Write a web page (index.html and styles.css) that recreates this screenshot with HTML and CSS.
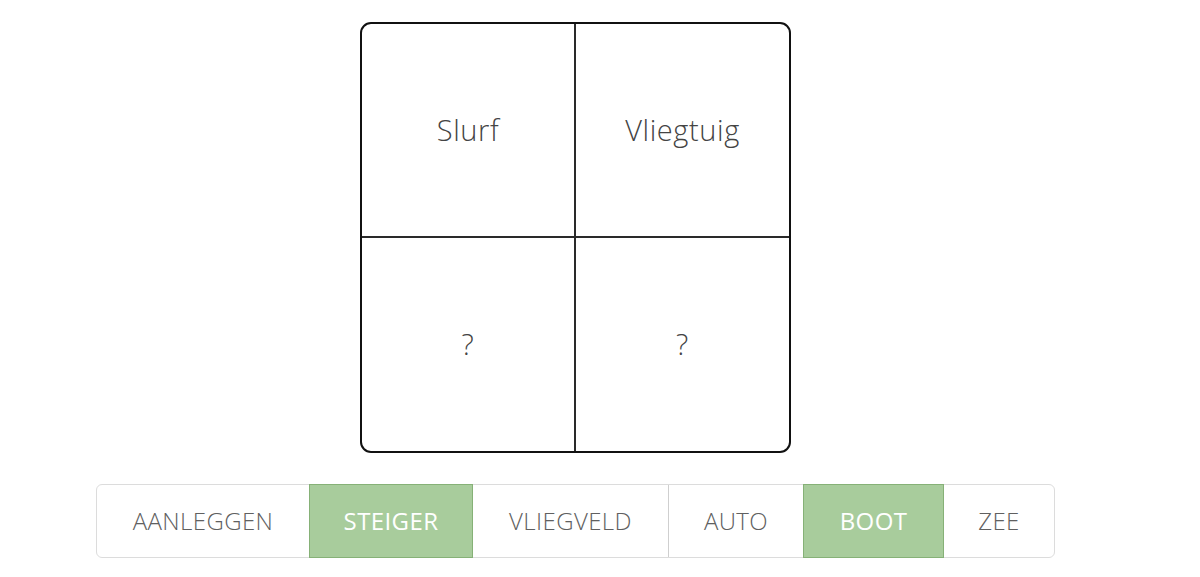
FILE: index.html
```html
<!DOCTYPE html>
<html>
<head>
<meta charset="utf-8">
<link rel="stylesheet" href="styles.css">
</head>
<body>
<div class="page">
  <div class="grid">
    <div class="cell c-tl">Slurf</div>
    <div class="cell c-tr">Vliegtuig</div>
    <div class="cell c-bl">?</div>
    <div class="cell c-br">?</div>
  </div>
  <div class="options">
    <div class="btn w1">AANLEGGEN</div>
    <div class="btn w2 active">STEIGER</div>
    <div class="btn w3">VLIEGVELD</div>
    <div class="btn w4 sep">AUTO</div>
    <div class="btn w5 active">BOOT</div>
    <div class="btn w6">ZEE</div>
  </div>
</div>
</body>
</html>
```
FILE: styles.css
```css
html, body {
  margin: 0;
  padding: 0;
  background: #fff;
}
body {
  font-family: "Open Sans", "Noto Sans", sans-serif;
}
.page {
  width: 1151px;
  display: flex;
  flex-direction: column;
  align-items: center;
  padding-top: 22px;
}
.grid {
  width: 427px;
  height: 427px;
  border: 2px solid #111;
  border-radius: 11px;
  display: grid;
  grid-template-columns: 214px 1fr;
  grid-template-rows: 214px 1fr;
  overflow: hidden;
}
.cell {
  display: flex;
  align-items: center;
  justify-content: center;
  font-size: 29px;
  font-weight: 300;
  color: #444;
  letter-spacing: 0.6px;
  padding-bottom: 2px;
}
.c-tl { border-right: 2px solid #2a2a2a; border-bottom: 2px solid #2a2a2a; }
.c-tr { border-bottom: 2px solid #2a2a2a; }
.c-bl { border-right: 2px solid #2a2a2a; }
.options {
  margin-top: 31px;
  display: flex;
  border: 1px solid #dcdcdc;
  border-radius: 6px;
  height: 72px;
}
.btn {
  display: flex;
  align-items: center;
  justify-content: center;
  font-size: 24px;
  font-weight: 300;
  color: #606060;
  letter-spacing: 0.4px;
  box-sizing: border-box;
  flex: none;
  padding-bottom: 2px;
}
.w1 { width: 212px; }
.w2 { width: 164px; }
.w3 { width: 195px; }
.w4 { width: 135px; }
.w5 { width: 141px; }
.w6 { width: 110px; }
.btn.sep {
  border-left: 1px solid #cfcfcf;
}
.btn.active {
  background: #a8cc9c;
  color: #fff;
  border: 1px solid #86b177;
  margin: -1px 0;
  height: 74px;
  font-weight: 400;
}
```
